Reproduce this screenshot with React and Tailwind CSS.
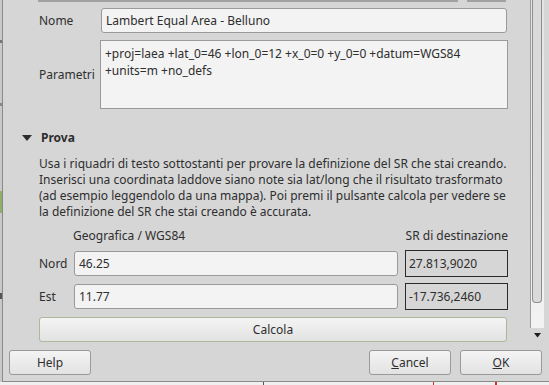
export default function App() {
  const inputCls =
    "bg-[#f3f3f3] border border-[#9a9a9a] rounded-[3px] flex items-center px-[4px] text-[#2e2e2e]";
  const btnCls =
    "h-[25px] w-[82px] border border-[#9a9a9a] rounded-[3px] bg-gradient-to-b from-[#f4f4f4] to-[#e2e2e2] flex items-center justify-center text-[#2e2e2e]";
  return (
    <div className="w-[549px] h-[385px] overflow-hidden flex flex-col bg-[#efefef] font-['Noto_Sans',sans-serif] text-[12px] leading-[16px] text-[#2e2e2e]">
      <div className="flex h-[382px]">
        {/* background app strip */}
        <div className="w-[2px] flex flex-col bg-[#c9c9c9]">
          <div className="h-[40px]" />
          <div className="h-[3px] bg-[#777]" />
          <div className="h-[60px]" />
          <div className="h-[3px] bg-[#888]" />
          <div className="h-[85px]" />
          <div className="h-[22px] bg-[#8fae6a]" />
          <div className="h-[80px]" />
          <div className="h-[6px] bg-[#555]" />
        </div>
        {/* dialog */}
        <div className="flex-1 flex flex-col bg-[#d6d6d6] border-l border-b border-[#8a8a8a]">
          <div className="flex h-[344px]">
            {/* content */}
            <div className="w-[527px] flex flex-col">
              <div className="flex h-[2px]">
                <div className="ml-[35px] w-[420px] bg-[#a2a2a2]" />
                <div className="ml-[9px] w-[39px] bg-[#a2a2a2]" />
              </div>
              <div className="flex items-center mt-[6px] pl-[36px]">
                <div className="w-[62px]">Nome</div>
                <div className={inputCls + " w-[406px] h-[25px]"}>Lambert Equal Area - Belluno</div>
              </div>
              <div className="flex items-center mt-[7px] pl-[36px]">
                <div className="w-[61px]">Parametri</div>
                <div className="w-[408px] h-[69px] bg-[#f3f3f3] border border-[#9a9a9a] px-[4px] pt-[4px] leading-[17px]">
                  +proj=laea +lat_0=46 +lon_0=12 +x_0=0 +y_0=0 +datum=WGS84
                  <br />
                  +units=m +no_defs
                </div>
              </div>
              <div className="flex items-center mt-[21px] h-[16px] pl-[19px]">
                <svg width="10" height="7" viewBox="0 0 10 7" className="mr-[9px]">
                  <polygon points="0,0 10,0 5,6" fill="#2e2e2e" />
                </svg>
                <span className="font-bold">Prova</span>
              </div>
              <div className="mt-[10px] pl-[36px] whitespace-nowrap">
                Usa i riquadri di testo sottostanti per provare la definizione del SR che stai creando.
                <br />
                Inserisci una coordinata laddove siano note sia lat/long che il risultato trasformato
                <br />
                (ad esempio leggendolo da una mappa). Poi premi il pulsante calcola per vedere se
                <br />
                la definizione del SR che stai creando è accurata.
              </div>
              <div className="flex mt-[8px] pl-[70px] w-[505px] justify-between">
                <span>Geografica / WGS84</span>
                <span>SR di destinazione</span>
              </div>
              <div className="flex items-center h-[27px] mt-[6px] pl-[36px]">
                <div className="w-[35px]">Nord</div>
                <div className={inputCls + " w-[324px] h-[25px] px-[3px]"}>46.25</div>
                <div className="ml-[7px] w-[103px] h-[27px] border border-[#2a2a2a] flex items-center px-[3px]">
                  27.813,9020
                </div>
              </div>
              <div className="flex items-center h-[27px] mt-[6px] pl-[36px]">
                <div className="w-[35px]">Est</div>
                <div className={inputCls + " w-[324px] h-[25px] px-[3px]"}>11.77</div>
                <div className="ml-[7px] w-[103px] h-[27px] border border-[#2a2a2a] flex items-center px-[3px]">
                  -17.736,2460
                </div>
              </div>
              <div className="ml-[36px] mt-[7px] w-[468px] h-[25px] border border-[#a9b99a] rounded-[3px] bg-gradient-to-b from-[#f4f4f4] to-[#e2e2e2] flex items-center justify-center">
                Calcola
              </div>
            </div>
            {/* scrollbar */}
            <div className="w-[14px] flex flex-col">
              <div className="h-[328px] border-l border-[#9c9c9c] bg-gradient-to-b from-[#e4e4e4] to-[#f2f2f2] flex">
                <div className="ml-[1px] w-[10px] h-[303px] border border-t-0 border-[#8e8e8e] rounded-b-[4px] bg-[#dadada]" />
              </div>
              <div className="flex justify-center mt-[5px]">
                <svg width="7" height="5" viewBox="0 0 7 5">
                  <polygon points="0,0 7,0 3.5,4.5" fill="#1e1e1e" />
                </svg>
              </div>
            </div>
            <div className="flex-1" />
          </div>
          {/* buttons */}
          <div className="flex items-center mt-[6px] pl-[6px]">
            <div className={btnCls}>Help</div>
            <div className="flex-1" />
            <div className={btnCls}>
              <span>
                <span className="underline">C</span>ancel
              </span>
            </div>
            <div className={btnCls + " ml-[9px] mr-[7px]"}>
              <span>
                <span className="underline">O</span>K
              </span>
            </div>
          </div>
        </div>
      </div>
      <div className="flex h-[3px]">
        <div className="ml-[263px] w-[1px] bg-[#555]" />
        <div className="ml-[169px] w-[1px] bg-[#d03030]" />
        <div className="ml-[61px] w-[2px] bg-[#d03030]" />
      </div>
    </div>
  );
}
